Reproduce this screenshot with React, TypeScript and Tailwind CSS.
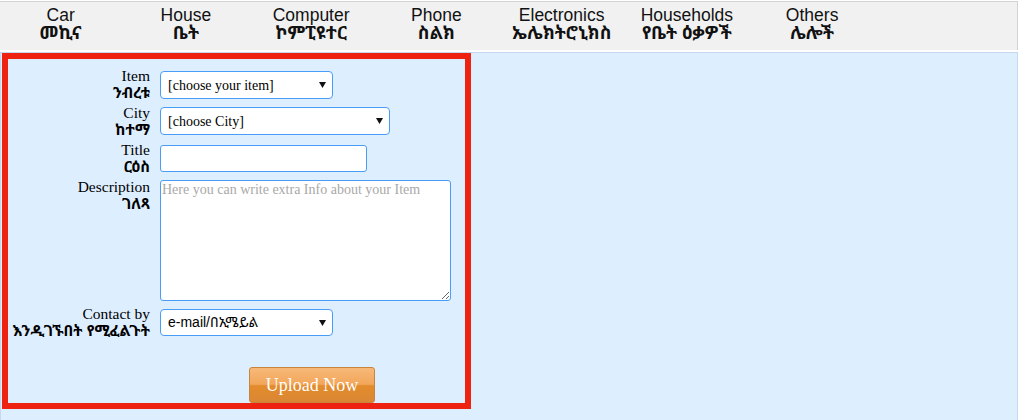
import type { ReactNode } from "react";

const serif = "font-['Liberation_Serif','Noto_Sans_Ethiopic','Abyssinica_SIL',serif]";
const sans = "font-['Liberation_Sans','Noto_Sans_Ethiopic','Abyssinica_SIL',sans-serif]";

const categories = [
  { en: "Car", am: "መኪና" },
  { en: "House", am: "ቤት" },
  { en: "Computer", am: "ኮምፒዩተር" },
  { en: "Phone", am: "ስልክ" },
  { en: "Electronics", am: "ኤሌክትሮኒክስ" },
  { en: "Households", am: "የቤት ዕቃዎች" },
  { en: "Others", am: "ሌሎች" },
];

function Arrow() {
  return (
    <svg
      className="pointer-events-none absolute right-[7px] top-1/2 -translate-y-1/2"
      width="7"
      height="6"
      viewBox="0 0 7 6"
    >
      <polygon points="0,0 7,0 3.5,6" fill="#111" />
    </svg>
  );
}

function Select({
  width,
  height = "h-[28px]",
  font = serif,
  text,
}: {
  width: string;
  height?: string;
  font?: string;
  text: string;
}) {
  return (
    <div className={`relative ${width} ${height}`}>
      <select
        defaultValue=""
        className={`h-full w-full appearance-none rounded-[4px] border border-[#4a9df7] bg-white pl-[7px] pr-5 text-[14px] text-black outline-none ${font}`}
      >
        <option value="">{text}</option>
      </select>
      <Arrow />
    </div>
  );
}

function Row({
  label,
  am,
  rowMt,
  ctrlMt,
  children,
}: {
  label: string;
  am: string;
  rowMt: string;
  ctrlMt: string;
  children: ReactNode;
}) {
  return (
    <div className={`flex items-start gap-[10px] ${rowMt}`}>
      <div className="w-[142px] shrink-0 whitespace-nowrap text-right text-[15.5px] leading-[17px] text-black">
        <div className={serif}>{label}</div>
        <div className={`${sans} flex justify-end text-[15px] font-bold`}>{am}</div>
      </div>
      <div className={ctrlMt}>{children}</div>
    </div>
  );
}

export default function App() {
  return (
    <div className="h-[420px] w-[1018px] overflow-hidden bg-white pt-px">
      <nav className="h-[49px] border-t border-r border-[#d3d3d3] bg-[#f1f1f1] pt-[4px]">
        <div className={`-ml-[2px] flex text-[17.5px] leading-[18px] text-[#111] ${sans}`}>
          {categories.map((c) => (
            <a key={c.en} href="#" className="block w-[125.25px] shrink-0 text-center">
              <div>{c.en}</div>
              <div className="whitespace-nowrap text-[18px] font-bold">{c.am}</div>
            </a>
          ))}
        </div>
      </nav>

      <div className="mt-[2px] h-[368px] border-x border-t border-[#c5d8ef] bg-[#ddeeff] pl-px">
        <form className="box-border h-[356px] w-[469px] overflow-hidden border-[6px] border-[#ee2211] pt-[8px]">
          <Row label="Item" am="ንብረቱ" rowMt="mt-0" ctrlMt="mt-[4px]">
            <Select width="w-[173px]" text="[choose your item]" />
          </Row>
          <Row label="City" am="ከተማ" rowMt="mt-[3px]" ctrlMt="mt-[3px]">
            <Select width="w-[230px]" text="[choose City]" />
          </Row>
          <Row label="Title" am="ርዕስ" rowMt="mt-[3px]" ctrlMt="mt-[3px]">
            <input
              type="text"
              className={`h-[27px] w-[207px] rounded-[3px] border border-[#4a9df7] bg-white px-1 text-[14px] outline-none ${serif}`}
            />
          </Row>
          <Row label="Description" am="ገለጻ" rowMt="mt-[3px]" ctrlMt="mt-[2px]">
            <textarea
              placeholder="Here you can write extra Info about your Item"
              className={`block h-[121px] w-[291px] resize rounded-[3px] border border-[#4a9df7] bg-white px-px pt-0 text-[14px] leading-[17px] outline-none placeholder:text-[#a9a9a9] ${serif}`}
            />
          </Row>
          <Row label="Contact by" am="እንዲገኙበት የሚፈልጉት" rowMt="mt-[4px]" ctrlMt="mt-[4px]">
            <Select width="w-[173px]" height="h-[27px]" font={sans} text="e-mail/በኢሜይል" />
          </Row>
          <button
            type="button"
            className={`ml-[241px] mt-[28px] block h-[36px] w-[126px] rounded-[3px] border border-[#c7843a] bg-[linear-gradient(to_bottom,#f7b979_0%,#f2a65a_48%,#e38c2c_52%,#da8734_100%)] text-[18px] text-white ${serif}`}
          >
            Upload Now
          </button>
        </form>
      </div>
    </div>
  );
}
